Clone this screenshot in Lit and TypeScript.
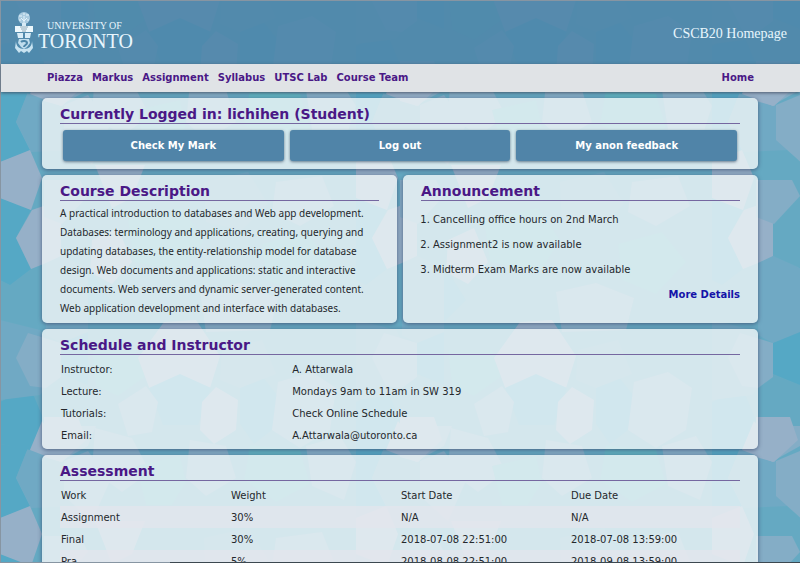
import { LitElement, html, css, svg } from "lit";
import { customElement } from "lit/decorators.js";

type Shape = [points: string, fill: string];

/* One tile of the backdrop; it repeats in both directions. */
const TILE = 356;
const BRIGHT = "#55a8c5";
const PALE = "#70a9c4";
const MIST = "#84adc6";
const LAVENDER = "#96b0c8";
const TEAL = "#60b2c0";
const SHAPES: Shape[] = [
  ["0,88 28,92 16,122 31,152 0,162", BRIGHT],
  ["0,198 31,210 16,238 31,269 10,285 0,280", BRIGHT],
  ["46,262 90,268 110,300 80,330 46,326", BRIGHT],
  ["0,402 30,387 44,420 30,450 0,444", BRIGHT],
  ["46,263 61,256 88,268 88,335 61,343 46,335", PALE],
  ["0,320 40,330 60,370 40,395 0,400", PALE],
  ["16,122 28,92 60,90 75,150 31,152", PALE],
  ["0,162 30,150 42,178 31,210 0,198", LAVENDER],
  ["16,238 32,210 61,200 61,256 46,263 31,269", LAVENDER],
  ["16,358 28,333 61,343 61,377 46,388 30,386", MIST],
  ["61,343 88,332 88,385 61,374", BRIGHT],
  ["30,450 42,421 61,448 61,462", LAVENDER],
  ["64,105 88,95 110,125 92,165 64,140", MIST],
  ["46,94 61,105 88,90 96,70 46,70", MIST],
  ["44,180 80,180 88,196 62,224 44,217", MIST],
  ["44,417 78,417 86,440 62,462 44,457", LAVENDER],
  ["95,165 145,165 132,198 112,208", LAVENDER],
  ["128,220 182,208 204,240 184,272 134,262", TEAL],
  ["200,292 240,283 278,298 270,330 206,332", MIST],
  ["92,240 118,228 132,262 112,284 90,272", LAVENDER],
  ["92,350 136,350 146,376 118,396 96,386", TEAL],
  ["138,358 164,322 196,320 220,356 210,388 180,375 150,390", LAVENDER],
  ["180,374 211,388 198,425 163,425 149,388", BRIGHT],
  ["118,404 146,386 158,402 152,432 128,436", MIST],
  ["202,402 216,387 238,400 236,430 214,444 200,430", LAVENDER],
  ["240,388 262,376 278,396 272,430 254,444 240,424", BRIGHT],
  ["278,382 312,372 336,388 330,430 300,448 272,430", MIST],
  ["222,350 262,340 276,374 240,388 220,380", PALE],
  ["95,428 132,438 150,472 122,492 92,470", MIST],
  ["136,466 180,456 186,482 172,505 146,505", TEAL],
  ["190,440 226,446 236,478 206,496 186,478", MIST],
  ["250,445 300,450 310,484 276,502 244,480", TEAL],
  ["306,446 340,436 356,462 344,500 312,486", MIST],
  ["204,182 248,172 268,204 242,230 206,222", PALE],
  ["276,182 322,176 334,206 300,226 272,212", MIST],
  ["262,244 306,232 330,262 300,294 266,280", TEAL],
];
const COPIES = [0, -TILE];

const LINKS = ["Piazza", "Markus", "Assignment", "Syllabus", "UTSC Lab", "Course Team"];
const ACTIONS = ["Check My Mark", "Log out", "My anon feedback"];
const NEWS = [
  "Cancelling office hours on 2nd March",
  "Assignment2 is now available",
  "Midterm Exam Marks are now available",
];
const SCHEDULE = [
  ["Instructor:", "A. Attarwala"],
  ["Lecture:", "Mondays 9am to 11am in SW 319"],
  ["Tutorials:", "Check Online Schedule"],
  ["Email:", "A.Attarwala@utoronto.ca"],
];
const WORK = [
  ["Assignment", "30%", "N/A", "N/A"],
  ["Final", "30%", "2018-07-08 22:51:00", "2018-07-08 13:59:00"],
  ["Pra", "5%", "2018-08-08 22:51:00", "2018-09-08 13:59:00"],
];

@customElement("app-root")
export class AppRoot extends LitElement {
  static styles = css`
    * { box-sizing: border-box; }
    :host {
      display: block;
      position: relative;
      min-height: 100vh;
      color: #24282c;
      background: #65a9c2;
      font: 10px/19px "DejaVu Sans", Verdana, sans-serif;
    }
    a { text-decoration: none; color: inherit; }
    h2 {
      margin: 0;
      border-bottom: 1px solid #7567a0;
      color: #4a1886;
      font-size: 14px;
      line-height: 18px;
    }
    .backdrop { position: absolute; inset: 0; width: 100%; height: 100%; }
    .page {
      position: relative;
      border: solid #8795a2;
      border-width: 1px 0 0 1px;
    }
    .banner {
      display: flex;
      align-items: center;
      justify-content: space-between;
      height: 63px;
      padding: 0 13px;
      background: rgba(79, 134, 170, 0.9);
      color: #e8f6fd;
      font-family: "Liberation Serif", "Times New Roman", serif;
    }
    .brand { display: flex; align-items: center; gap: 4px; }
    .crest { width: 20px; height: 44px; }
    .name { display: grid; padding-top: 4px; }
    .small { padding-left: 9px; font-size: 10px; line-height: 12px; }
    .large { font-size: 20px; line-height: 18px; }
    .title { font-size: 14px; padding-top: 2px; }
    .bar {
      display: flex;
      gap: 9px;
      padding: 4px 46px 5px;
      background: #e0e3e6;
      box-shadow: 0 1px 3px rgba(60, 70, 90, 0.8);
      color: #4a1886;
      font-weight: bold;
    }
    .home { margin-left: auto; }
    main { display: grid; gap: 6px; padding: 6px 42px 20px 41px; }
    .pair { display: grid; grid-template-columns: 1fr 1fr; gap: 6px; }
    .card {
      padding: 7px 18px 5px;
      border-radius: 5px;
      background: rgba(240, 246, 248, 0.8);
      box-shadow: 0 1px 4px rgba(60, 75, 110, 0.8);
    }
    .tabular { padding-bottom: 3px; }
    .actions {
      display: grid;
      grid-template-columns: repeat(3, 1fr);
      gap: 6px;
      padding: 6px 3px 3px;
    }
    .action {
      height: 31px;
      padding: 0;
      border: 0;
      border-radius: 3px;
      background: #5084a8;
      box-shadow: 0 1px 3px rgba(50, 75, 100, 0.7);
      color: #fff;
      font: inherit;
      font-weight: bold;
    }
    .about {
      margin: 0;
      padding-top: 3px;
      font-family: "Noto Sans", Verdana, sans-serif;
    }
    .news {
      margin: 0;
      padding: 6px 0 0 12px;
      line-height: 25px;
    }
    .more {
      display: block;
      color: #1414a8;
      font-weight: bold;
      line-height: 25px;
      text-align: right;
    }
    table {
      width: 100%;
      margin-top: 3px;
      border-collapse: collapse;
      table-layout: fixed;
    }
    th, td {
      height: 22px;
      padding: 0 1px;
      font-weight: normal;
      text-align: left;
      line-height: 19px;
    }
    .label { width: 34%; }
    .work tbody tr:nth-child(odd) { background: rgba(228, 230, 236, 0.7); }
    .edge {
      position: fixed;
      inset: auto 0 0 0;
      height: 1px;
      background: linear-gradient(90deg, #8795a2 170px, #3c4850 170px);
    }
  `;

  render() {
    return html`
      <svg class="backdrop" aria-hidden="true">
        <defs>
          <pattern id="tile" width=${TILE} height=${TILE} patternUnits="userSpaceOnUse">
            ${COPIES.flatMap((x) => COPIES.map((y) => svg`
              <g transform="translate(${x} ${y})">
                ${SHAPES.map(([p, f]) => svg`<polygon points=${p} fill=${f}></polygon>`)}
              </g>`))}
          </pattern>
        </defs>
        <rect width="100%" height="100%" fill="url(#tile)"></rect>
      </svg>
      <div class="page">
        <header class="banner">
          <div class="brand">
            <svg class="crest" viewBox="0 0 20 44" aria-hidden="true">
              <circle cx="10" cy="7" r="6" fill="#a9cbe0"></circle>
              <path d="M5 5h3M12 4h3M9 3h2M5 9h2M13 9h2M10 5v9M7 7l3 3 3-3" fill="none" stroke="#e4f3fb"></path>
              <path d="M8 12h4v3H8z" fill="#d8ebf6"></path>
              <path d="M1 15h18v6H1z" fill="#ecf7fc"></path>
              <path d="M6 16h8M7 18h6M8 20h4" stroke="#8fa9b8"></path>
              <path d="M3 22h6v5H4zM11 22h6l-1 5h-5z" fill="#d8ecf7"></path>
              <path d="M5 28h10l1 4-3 4-3 2-3-2-3-4z" fill="#bfdcec"></path>
              <path d="M7 31c2-2 6-1 6 1s-3 2-3 4" fill="none" stroke="#4d86a8" stroke-width="2"></path>
              <path d="M2 30c0 5 3 8 8 8s8-3 8-8l1 7-4 5-2-2-3 2-3-2-2 2-4-5z" fill="#c8e3f1"></path>
            </svg>
            <div class="name">
              <span class="small">UNIVERSITY OF</span>
              <span class="large">TORONTO</span>
            </div>
          </div>
          <span class="title">CSCB20 Homepage</span>
        </header>
        <nav class="bar">
          ${LINKS.map((l) => html`<a href="#">${l}</a>`)}
          <a class="home" href="#">Home</a>
        </nav>
        <main>
          <section class="card">
            <h2>Currently Logged in: lichihen (Student)</h2>
            <div class="actions">
              ${ACTIONS.map((a) => html`<button class="action" type="button">${a}</button>`)}
            </div>
          </section>
          <div class="pair">
            <section class="card">
              <h2>Course Description</h2>
              <p class="about">
                A practical introduction to databases and Web app development.<br />
                Databases: terminology and applications, creating, querying and<br />
                updating databases, the entity-relationship model for database<br />
                design. Web documents and applications: static and interactive<br />
                documents. Web servers and dynamic server-generated content.<br />
                Web application development and interface with databases.
              </p>
            </section>
            <section class="card">
              <h2>Announcement</h2>
              <ol class="news">${NEWS.map((n) => html`<li>${n}</li>`)}</ol>
              <a class="more" href="#">More Details</a>
            </section>
          </div>
          <section class="card tabular">
            <h2>Schedule and Instructor</h2>
            <table>
              ${SCHEDULE.map(([k, v]) => html`<tr><th class="label" scope="row">${k}</th><td>${v}</td></tr>`)}
            </table>
          </section>
          <section class="card tabular">
            <h2>Assessment</h2>
            <table class="work">
              <thead>
                <tr><th>Work</th><th>Weight</th><th>Start Date</th><th>Due Date</th></tr>
              </thead>
              <tbody>
                ${WORK.map((r) => html`<tr>${r.map((c) => html`<td>${c}</td>`)}</tr>`)}
              </tbody>
            </table>
          </section>
        </main>
      </div>
      <div class="edge"></div>`;
  }
}
